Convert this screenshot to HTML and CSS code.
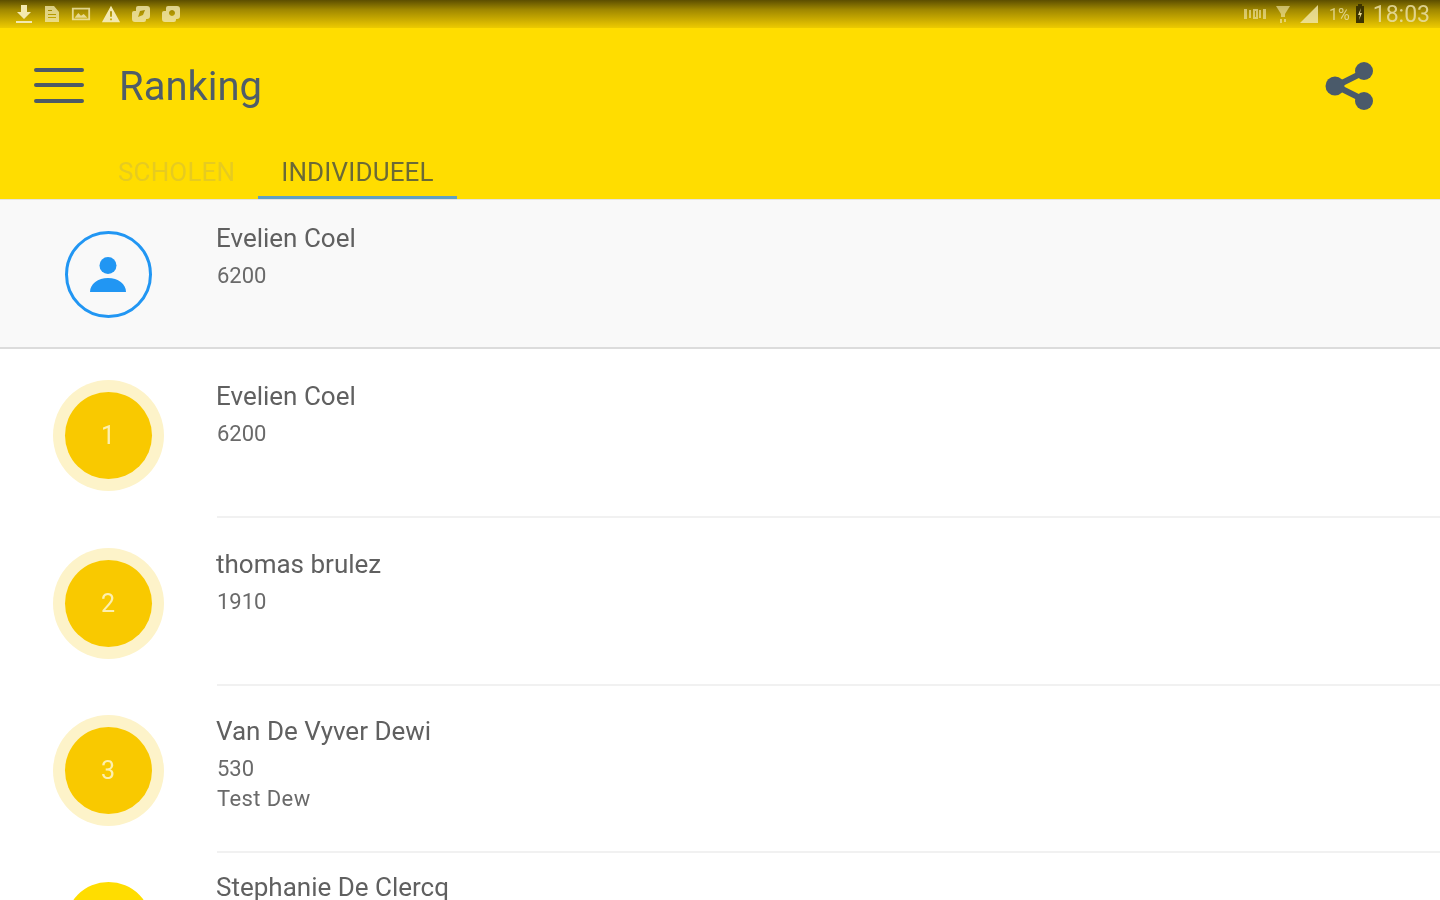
FILE: index.html
```html
<!DOCTYPE html>
<html lang="nl">
<head>
  <meta charset="UTF-8" />
  <meta name="viewport" content="width=device-width, initial-scale=1.0">
  <title>Ranking</title>
  <link rel="stylesheet" href="styles.css">
</head>
<body>
  <!-- Statusbalk -->
  <div class="statusbar">
    <div class="status-icons">
      <svg width="18" height="20" viewBox="0 0 18 20"><path d="M6 1h6v7h4l-7 7-7-7h4zM1 17h16v2H1z"/></svg>
      <svg width="18" height="20" viewBox="0 0 18 20"><path d="M2 2h9l5 6v10H2zM5 6v1h4V6zM5 10v1h8v-1zM5 13v1h8v-1z" fill-rule="evenodd" opacity=".75"/></svg>
      <svg width="20" height="18" viewBox="0 0 22 18"><path d="M1 2h20v14H1zM3 4v10h16V4zM4 13l4-5 3 3 3-2 4 4z" fill-rule="evenodd" opacity=".8"/></svg>
      <svg width="20" height="20" viewBox="0 0 22 20"><path d="M11 1l10 18H1zM10 7v6h2V7zM10 15v2h2v-2z" fill-rule="evenodd"/></svg>
      <svg width="20" height="18" viewBox="0 0 20 18"><path d="M7 1h9a3 3 0 0 1 3 3v7a3 3 0 0 1-3 3h-1v1a2 2 0 0 1-2 2H4a3 3 0 0 1-3-3V8a2 2 0 0 1 2-2h2V3a2 2 0 0 1 2-2zM9 6l-2 6 5-2 2-5z" fill-rule="evenodd" opacity=".8"/></svg>
      <svg width="20" height="18" viewBox="0 0 20 18"><path d="M7 1h9a3 3 0 0 1 3 3v7a3 3 0 0 1-3 3h-1v1a2 2 0 0 1-2 2H4a3 3 0 0 1-3-3V8a2 2 0 0 1 2-2h2V3a2 2 0 0 1 2-2zM11 5a3 3 0 1 0 .01 0z" fill-rule="evenodd" opacity=".8"/></svg>
    </div>
    <div class="status-right">
      <svg class="dim" width="24" height="14" viewBox="0 0 24 14"><path d="M1 2h3v10H1zM20 2h3v10h-3zM6 3h2v8H6zM10 2h5v10h-5zM12 4v6h1V4zM16 3h2v8h-2z" fill-rule="evenodd"/></svg>
      <svg class="dim" width="16" height="20" viewBox="0 0 16 20"><path d="M1 2h14l-5 8v3H6v-3zM5 15h2v4H5zM9 15h2v3H9z"/></svg>
      <svg class="dim sig" width="20" height="20" viewBox="0 0 20 20"><path d="M19 1v18H1z"/></svg>
      <span class="status-pct">1%</span>
      <svg class="batt" width="10" height="20" viewBox="0 0 10 20"><rect x="1" y="2" width="8" height="17" fill="#3d3400"/><rect x="3" y="0" width="4" height="2" fill="#3d3400"/><path d="M6 4L3 11h2l-1 5 3-7H5z" fill="#e8d98a"/></svg>
      <span class="status-time">18:03</span>
    </div>
  </div>

  <!-- Toolbar -->
  <div class="appbar">
    <div class="toolbar">
      <div class="menu-icon"><span></span><span></span><span></span></div>
      <div class="title">Ranking</div>
      <svg class="share-icon" width="50" height="50" viewBox="0 0 50 50">
        <path d="M39 11L11 25l28 14" fill="none" stroke="#4a5a6a" stroke-width="6"/>
        <circle cx="39" cy="10" r="9"/>
        <circle cx="10" cy="25" r="9.5"/>
        <circle cx="39" cy="40" r="9"/>
      </svg>
    </div>
    <div class="tabs">
      <div class="tab">SCHOLEN</div>
      <div class="tab active">INDIVIDUEEL</div>
    </div>
  </div>

  <!-- Eigen positie -->
  <div class="me-row">
    <div class="rank-col">
      <div class="me-circle">
        <svg width="36" height="36" viewBox="0 0 36 36"><circle cx="18" cy="8.5" r="8.5"/><path d="M0 35c0-8 8-14 18-14s18 6 18 14z"/></svg>
      </div>
    </div>
    <div class="info">
      <div class="name">Evelien Coel</div>
      <div class="sub">6200</div>
    </div>
  </div>

  <!-- Ranglijst -->
  <div class="list">
    <div class="row">
      <div class="rank-col"><div class="badge">1</div></div>
      <div class="info">
        <div class="name">Evelien Coel</div>
        <div class="sub">6200</div>
      </div>
    </div>
    <div class="row">
      <div class="rank-col"><div class="badge">2</div></div>
      <div class="info">
        <div class="name">thomas brulez</div>
        <div class="sub">1910</div>
      </div>
    </div>
    <div class="row">
      <div class="rank-col"><div class="badge">3</div></div>
      <div class="info">
        <div class="name">Van De Vyver Dewi</div>
        <div class="sub">530</div>
        <div class="sub team">Test Dew</div>
      </div>
    </div>
    <div class="row next">
      <div class="rank-col"><div class="badge"></div></div>
      <div class="info">
        <div class="name">Stephanie De Clercq</div>
      </div>
    </div>
  </div>
</body>
</html>
```
FILE: styles.css
```css
/* Algemeen */
html, body {
  height: 900px;
  overflow: hidden;
}

body {
  margin: 0;
  font-family: Roboto, Arial, sans-serif;
  background-color: #fff;
  color: #5c5c5c;
}

/* de screenshot is opgeschaald en dus wat wazig */
.status-icons,
.status-right,
.menu-icon,
.title,
.share-icon,
.tab,
.name,
.sub,
.me-circle,
.badge {
  filter: blur(0.6px);
}

/* Statusbalk */
.statusbar {
  height: 28px;
  display: flex;
  justify-content: space-between;
  align-items: center;
  padding: 0 10px 0 15px;
  background: linear-gradient(#5c4e00, #a08800 35%, #e2c000 90%, #eccb00);
  fill: #f3e9b0;
  color: #e9dfa5;
}

.status-icons {
  display: flex;
  align-items: center;
  gap: 10px;
}

.status-right {
  display: flex;
  align-items: center;
  gap: 8px;
}

.status-pct {
  font-size: 16px;
  opacity: 0.8;
}

.batt {
  margin: 0 0 0 -3px;
}

.status-time {
  font-size: 23px;
  opacity: 0.85;
}

.dim {
  opacity: 0.6;
}

.sig {
  margin-right: 2px;
  opacity: 0.8;
}

/* Toolbar */
.appbar {
  height: 171px;
  background-color: #ffdd00;
  display: flex;
  flex-direction: column;
  justify-content: space-between;
}

.toolbar {
  display: flex;
  align-items: center;
  padding: 33px 65px 0 34px;
}

.menu-icon {
  width: 50px;
  height: 35px;
  margin-top: -2px;
  display: flex;
  flex-direction: column;
  justify-content: space-between;
}

.menu-icon span {
  display: block;
  height: 4px;
  border-radius: 2px;
  background-color: #4d5a66;
}

.title {
  flex: 1;
  margin: 2px 0 0 35px;
  font-size: 40px;
  line-height: 48px;
  color: #4f5d69;
}

.share-icon {
  fill: #4a5a6a;
}

.tabs {
  display: flex;
  padding-left: 95px;
}

.tab {
  padding: 0 23px 7px;
  font-size: 26px;
  letter-spacing: 0.15px;
  line-height: 34px;
  color: #e6cb20;
  border-bottom: 3px solid transparent;
}

.tab.active {
  color: #6b6a36;
  border-bottom-color: #5fa0c4;
}

/* Rijen */
.me-row {
  height: 147px;
  display: flex;
  background-color: #f9f9f9;
  border-top: 1px solid #e4e4e0;
  border-bottom: 2px solid #dcdcdc;
}

.list {
  height: 551px;
  overflow: hidden;
}

.row {
  height: 167.5px;
  display: flex;
}

.rank-col {
  width: 217px;
  flex-shrink: 0;
  padding: 31px 1px 0 0;
  box-sizing: border-box;
  display: flex;
  justify-content: center;
  align-items: flex-start;
}

.row .rank-col {
  padding-top: 43px;
}

.info {
  flex: 1;
  padding-top: 30px;
  margin-bottom: -1.5px;
  border-bottom: 2px solid #f1f1f1;
  box-sizing: border-box;
}

.me-row .info {
  padding-top: 21px;
  margin-bottom: 0;
  border-bottom: none;
}

.name {
  margin-left: -1px;
  font-size: 26px;
  line-height: 34px;
  color: #606060;
}

.sub {
  margin-top: 6px;
  font-size: 22px;
  line-height: 30px;
  color: #6a6a6a;
}

.sub.team {
  margin-top: 0;
  letter-spacing: 0.4px;
}

/* volgende rij staat in de screenshot wat hoger */
.row.next .rank-col {
  padding-top: 30px;
}

.row.next .info {
  padding-top: 18px;
  border-bottom: none;
}

/* Cirkels */
.me-circle {
  width: 87px;
  height: 87px;
  box-sizing: border-box;
  border: 3px solid #2196f3;
  border-radius: 50%;
  display: flex;
  align-items: center;
  justify-content: center;
  fill: #2196f3;
}

.badge {
  width: 87px;
  height: 87px;
  border-radius: 50%;
  background-color: #f9c900;
  box-shadow: 0 0 0 12px #fdf3c9;
  color: #fdf0b0;
  font-size: 25px;
  display: flex;
  align-items: center;
  justify-content: center;
}

.row.next .badge {
  background-color: #ffdd00;
  box-shadow: none;
}
```
